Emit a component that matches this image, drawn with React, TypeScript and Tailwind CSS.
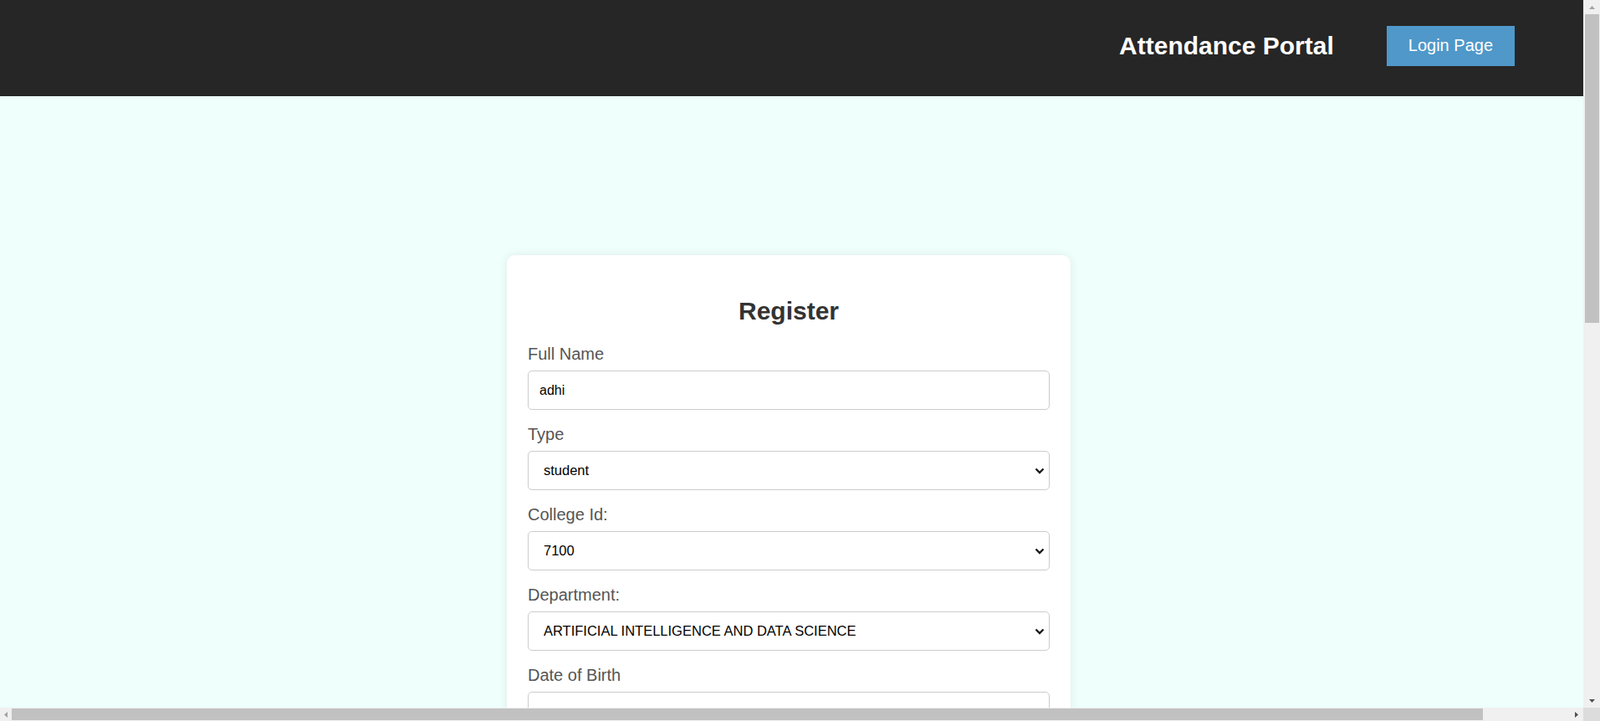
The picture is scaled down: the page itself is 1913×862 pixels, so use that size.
import { useState } from 'react';

const Chevron = () => (
  <svg
    width="12"
    height="8"
    viewBox="0 0 12 8"
    className="pointer-events-none absolute right-[6px] top-1/2 -translate-y-1/2"
  >
    <path d="M1.5 1.5 L6 6 L10.5 1.5" fill="none" stroke="#1a1a1a" strokeWidth="2.4" />
  </svg>
);

// little scrollbar arrow, dir = up | down | left | right
const Arrow = ({ dir, color }: { dir: string; color: string }) => {
  const pts: Record<string, string> = {
    up: '0,4 3.5,0 7,4',
    down: '0,0 7,0 3.5,4',
    left: '4,0 4,7 0,3.5',
    right: '0,0 0,7 4,3.5',
  };
  const vertical = dir === 'up' || dir === 'down';
  return (
    <svg width={vertical ? 7 : 4} height={vertical ? 4 : 7} viewBox={vertical ? '0 0 7 4' : '0 0 4 7'}>
      <polygon points={pts[dir]} fill={color} />
    </svg>
  );
};

const Label = ({ children }: { children: React.ReactNode }) => (
  <label className="mb-[8px] block text-[20px] leading-[23px] text-[#555]">{children}</label>
);

const inputCls =
  'mb-[18px] block h-[47px] w-full rounded-[5px] border border-[#ccc] bg-white px-[13px] text-[16px] text-black outline-none';

const Select = ({ value, options }: { value: string; options: string[] }) => (
  <div className="relative mb-[18px]">
    <select
      defaultValue={value}
      className="block h-[47px] w-full appearance-none rounded-[5px] border border-[#ccc] bg-white pl-[18px] pr-[30px] text-[16.5px] text-black outline-none"
    >
      {options.map((o) => (
        <option key={o}>{o}</option>
      ))}
    </select>
    <Chevron />
  </div>
);

export default function App() {
  const [name, setName] = useState('adhi');

  return (
    <div className="flex h-screen w-screen flex-col overflow-hidden font-['Liberation_Sans',Arial,sans-serif]">
      <div className="flex min-h-0 flex-1">
        {/* page viewport */}
        <div className="min-w-0 flex-1 overflow-hidden bg-[#effffb]">
          <div className="w-[2010px]">
            {/* Top bar */}
            <header className="h-[115px] bg-[#262626]">
              <div className="flex h-full w-[1896px] items-center justify-end pb-[6px] pr-[85px]">
                <h1 className="text-[30px] font-bold leading-normal text-white">Attendance Portal</h1>
                <button className="ml-[63px] h-[48px] bg-[#4f98c9] px-[26px] text-[20px] leading-[23px] text-white">
                  Login Page
                </button>
              </div>
            </header>

            {/* Register form */}
            <main className="flex w-[1886px] justify-center pb-[300px] pt-[190px]">
              <div className="w-[674px] rounded-[10px] bg-white px-[25px] pb-[25px] pt-[44px] shadow-[0_0_12px_rgba(0,0,0,0.08)]">
                <h2 className="mb-[18px] text-center text-[30px] font-bold leading-normal text-[#333]">Register</h2>

                <Label>Full Name</Label>
                <input className={inputCls} value={name} onChange={(e) => setName(e.target.value)} />

                <Label>Type</Label>
                <Select value="student" options={['student', 'staff']} />

                <Label>College Id:</Label>
                <Select value="7100" options={['7100', '7101', '7102']} />

                <Label>Department:</Label>
                <Select
                  value="ARTIFICIAL INTELLIGENCE AND DATA SCIENCE"
                  options={[
                    'ARTIFICIAL INTELLIGENCE AND DATA SCIENCE',
                    'COMPUTER SCIENCE AND ENGINEERING',
                    'INFORMATION TECHNOLOGY',
                  ]}
                />

                <Label>Date of Birth</Label>
                <input type="date" className={inputCls + ' pt-[6px]'} />

                <Label>Email</Label>
                <input type="email" className={inputCls} />

                <Label>Phone Number</Label>
                <input className={inputCls} />

                <Label>Year</Label>
                <Select value="I" options={['I', 'II', 'III', 'IV']} />

                <Label>Password</Label>
                <input type="password" className={inputCls} />

                <Label>Confirm Password</Label>
                <input type="password" className={inputCls} />

                <button className="mt-[10px] h-[48px] w-full rounded-[5px] bg-[#4f98c9] text-[20px] text-white">
                  Register
                </button>
              </div>
            </main>
          </div>
        </div>

        {/* vertical scrollbar */}
        <div className="flex w-[20px] flex-col bg-[#f0f0f0]">
          <div className="flex h-[17px] items-center justify-center">
            <Arrow dir="up" color="#a3a3a3" />
          </div>
          <div className="ml-[2px] mr-[1px] h-[369px] bg-[#c1c1c1]" />
          <div className="flex-1" />
          <div className="flex h-[17px] items-center justify-center">
            <Arrow dir="down" color="#505050" />
          </div>
        </div>
      </div>

      {/* horizontal scrollbar */}
      <div className="flex h-[16px]">
        <div className="flex flex-1 bg-[#f0f0f0]">
          <div className="flex w-[14px] items-center justify-center">
            <Arrow dir="left" color="#a3a3a3" />
          </div>
          <div className="my-[1px] w-[1759px] bg-[#c1c1c1]" />
          <div className="flex-1" />
          <div className="flex w-[17px] items-center justify-center">
            <Arrow dir="right" color="#505050" />
          </div>
        </div>
        <div className="w-[20px] bg-[#dcdcdc]" />
      </div>
    </div>
  );
}
